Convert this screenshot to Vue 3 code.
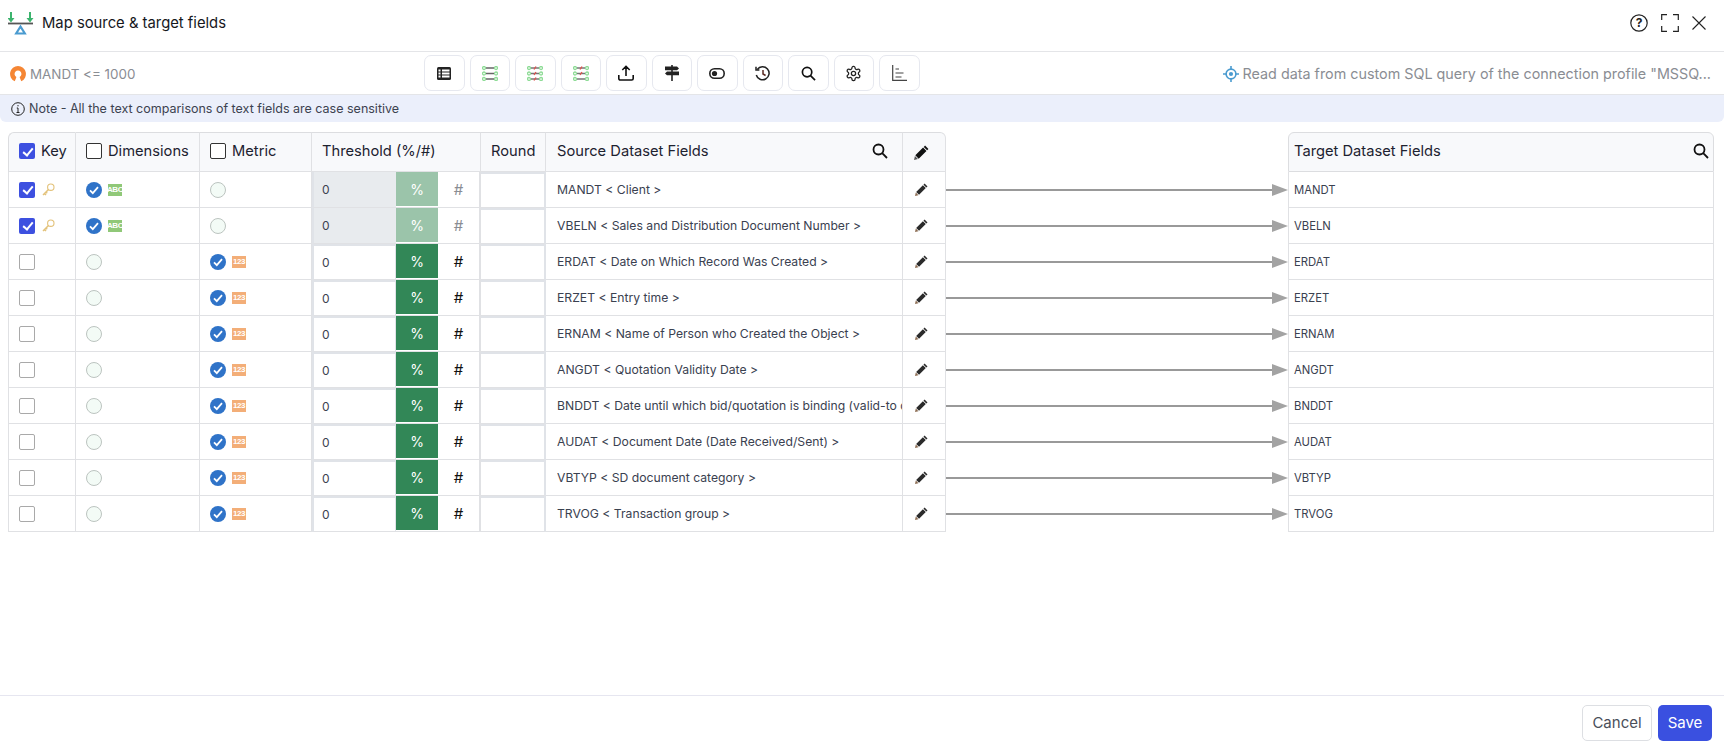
<script setup>
const sourceFields = [
  { name: 'MANDT', desc: 'MANDT < Client >', type: 'key' },
  { name: 'VBELN', desc: 'VBELN < Sales and Distribution Document Number >', type: 'key' },
  { name: 'ERDAT', desc: 'ERDAT < Date on Which Record Was Created >', type: 'metric' },
  { name: 'ERZET', desc: 'ERZET < Entry time >', type: 'metric' },
  { name: 'ERNAM', desc: 'ERNAM < Name of Person who Created the Object >', type: 'metric' },
  { name: 'ANGDT', desc: 'ANGDT < Quotation Validity Date >', type: 'metric' },
  { name: 'BNDDT', desc: 'BNDDT < Date until which bid/quotation is binding (valid-to date) >', type: 'metric' },
  { name: 'AUDAT', desc: 'AUDAT < Document Date (Date Received/Sent) >', type: 'metric' },
  { name: 'VBTYP', desc: 'VBTYP < SD document category >', type: 'metric' },
  { name: 'TRVOG', desc: 'TRVOG < Transaction group >', type: 'metric' },
]
const checkPath = 'M5 10.5 8.5 14 15 6.5'
const gearPath = 'M12.22 2h-.44a2 2 0 0 0-2 2v.18a2 2 0 0 1-1 1.73l-.43.25a2 2 0 0 1-2 0l-.15-.08a2 2 0 0 0-2.73.73l-.22.38a2 2 0 0 0 .73 2.73l.15.1a2 2 0 0 1 1 1.72v.51a2 2 0 0 1-1 1.74l-.15.09a2 2 0 0 0-.73 2.73l.22.38a2 2 0 0 0 2.73.73l.15-.08a2 2 0 0 1 2 0l.43.25a2 2 0 0 1 1 1.73V20a2 2 0 0 0 2 2h.44a2 2 0 0 0 2-2v-.18a2 2 0 0 1 1-1.73l.43-.25a2 2 0 0 1 2 0l.15.08a2 2 0 0 0 2.73-.73l.22-.39a2 2 0 0 0-.73-2.73l-.15-.08a2 2 0 0 1-1-1.74v-.5a2 2 0 0 1 1-1.74l.15-.09a2 2 0 0 0 .73-2.73l-.22-.38a2 2 0 0 0-2.73-.73l-.15.08a2 2 0 0 1-2 0l-.43-.25a2 2 0 0 1-1-1.73V4a2 2 0 0 0-2-2z'
</script>

<template>
  <div class="page">
    <header class="top">
      <svg class="logo" width="26" height="24" viewBox="0 0 26 24">
        <path d="M2 0h2v6h2.500L3 10.500-.5 6H2zM21 0h2v6h2.500L22 10.500 18.500 6H21z" fill="#3cb46e" transform="translate(0 1)" />
        <path d="M0 12.500h25" stroke="#555" stroke-width="1.800" />
        <path d="M12.500 15.500l4.300 7h-8.600z" fill="none" stroke="#4a9bd0" stroke-width="2.200" />
      </svg>
      <h1>Map source &amp; target fields</h1>
      <div class="top-actions">
        <svg width="18" height="18" viewBox="0 0 18 18">
          <circle cx="9" cy="9" r="8.200" fill="none" stroke="#222" stroke-width="1.200" />
          <text x="9" y="13.200" text-anchor="middle" class="qmark">?</text>
        </svg>
        <svg width="18" height="18" viewBox="0 0 18 18">
          <path d="M6 .7H.7V6M12 .7h5.300V6M6 17.300H.7V12M12 17.300h5.300V12" fill="none" stroke="#222" stroke-width="1.200" />
        </svg>
        <svg width="14" height="14" viewBox="0 0 14 14">
          <path d="M.5.5l13 13M13.500.5l-13 13" stroke="#222" stroke-width="1.100" />
        </svg>
      </div>
    </header>

    <div class="toolbar">
      <div class="filter">
        <svg width="16" height="16" viewBox="0 0 16 16">
          <path fill-rule="evenodd" d="M8 0a8 8 0 0 1 3.200 15.300L9.600 11a3.400 3.400 0 1 0-3.200 0l-1.600 4.300A8 8 0 0 1 8 0z" fill="#f58634" />
        </svg>
        <span>MANDT &lt;= 1000</span>
      </div>
      <div class="tools">
        <button class="tool">
          <svg width="14" height="13" viewBox="0 0 14 13"><rect width="14" height="13" rx="1.500" fill="#222" /><path d="M1.500 2.500h2v2h-2zM5 2.500h7.500v2H5zM1.500 5.500h2v2h-2zM5 5.500h7.500v2H5zM1.500 8.500h2v2h-2zM5 8.500h7.500v2H5z" fill="#fff" /></svg>
        </button>
        <button class="tool">
          <svg width="16" height="15" viewBox="0 0 16 15" fill="none" stroke="#8fdc97" stroke-width="1.300">
            <circle cx="2" cy="2" r="1.500" /><circle cx="14" cy="2" r="1.500" /><circle cx="2" cy="7.500" r="1.500" /><circle cx="14" cy="7.500" r="1.500" /><circle cx="2" cy="13" r="1.500" /><circle cx="14" cy="13" r="1.500" />
            <path d="M4 2h8M4 7.500h8M4 13h8" stroke="#666" />
          </svg>
        </button>
        <button class="tool">
          <svg width="16" height="15" viewBox="0 0 16 15" fill="none" stroke="#8fdc97" stroke-width="1.300">
            <circle cx="2" cy="2" r="1.500" /><circle cx="14" cy="2" r="1.500" /><circle cx="2" cy="7.500" r="1.500" /><circle cx="14" cy="7.500" r="1.500" /><circle cx="2" cy="13" r="1.500" /><circle cx="14" cy="13" r="1.500" />
            <path d="M4 2h8M4 7.500h8M4 13h8" stroke="#777" /><path d="M9 .5l-2 3M9 6l-2 3M9 11.500l-2 3" stroke="#e0524d" />
          </svg>
        </button>
        <button class="tool">
          <svg width="16" height="15" viewBox="0 0 16 15" fill="none" stroke="#8fdc97" stroke-width="1.300">
            <circle cx="2" cy="2" r="1.500" /><circle cx="14" cy="2" r="1.500" /><circle cx="2" cy="7.500" r="1.500" /><circle cx="14" cy="7.500" r="1.500" /><circle cx="2" cy="13" r="1.500" /><circle cx="14" cy="13" r="1.500" />
            <path d="M4 2h8M4 7.500h8M4 13h8" stroke="#777" /><path d="M9 .5l-2 3M9 6l-2 3" stroke="#e0524d" />
          </svg>
        </button>
        <button class="tool">
          <svg width="16" height="16" viewBox="0 0 16 16" fill="none" stroke="#111" stroke-width="1.600"><path d="M8 11V1.500M4.300 5L8 1.300 11.700 5M.8 10v3.500A1.500 1.500 0 0 0 2.300 15h11.400a1.500 1.500 0 0 0 1.500-1.500V10" /></svg>
        </button>
        <button class="tool">
          <svg width="14" height="16" viewBox="0 0 14 16"><path d="M6.200 0h1.600v16H6.200z" fill="#222" /><path d="M0 1.500h12l2 1.900-2 1.900H0zM2 6.500h12v3.800H2l-2-1.900z" fill="#222" /></svg>
        </button>
        <button class="tool">
          <svg width="16" height="11" viewBox="0 0 16 11"><rect x=".8" y=".8" width="14.400" height="9.400" rx="4.700" fill="none" stroke="#222" stroke-width="1.600" /><circle cx="5.500" cy="5.500" r="2.600" fill="#222" /></svg>
        </button>
        <button class="tool">
          <svg width="15" height="15" viewBox="0 0 15 15" fill="none" stroke="#222" stroke-width="1.500"><path d="M2.300 3.500A6.500 6.500 0 1 1 1.300 9" /><path d="M1 .8v3.200h3.400" /><path d="M8 4v4l2.600 1.500" stroke="#5a2a22" /></svg>
        </button>
        <button class="tool">
          <svg width="15" height="15" viewBox="0 0 16 16" fill="none" stroke="#111" stroke-width="1.800"><circle cx="6.500" cy="6.500" r="5" /><path d="M10.200 10.200L15 15" /></svg>
        </button>
        <button class="tool">
          <svg width="17" height="17" viewBox="0 0 24 24" fill="none" stroke="#222" stroke-width="1.800"><path :d="gearPath" /><circle cx="12" cy="12" r="3" /></svg>
        </button>
        <button class="tool">
          <svg width="15" height="16" viewBox="0 0 15 16" fill="none" stroke="#444" stroke-width="1.200"><path d="M.7 0v15.300H15" /><path d="M3.500 4h3.500M3.500 8h8M3.500 12h6" /></svg>
        </button>
      </div>
      <div class="origin">
        <svg width="16" height="16" viewBox="0 0 17 17" fill="none" stroke="#4a9bd0">
          <circle cx="8.500" cy="8.500" r="5.200" stroke-width="1.700" /><circle cx="8.500" cy="8.500" r="2.200" fill="#4a9bd0" stroke="none" />
          <path d="M8.500 0v3.500M8.500 13.500V17M0 8.500h3.500M13.500 8.500H17" stroke-width="1.700" />
        </svg>
        <span>Read data from custom SQL query of the connection profile "MSSQ...</span>
      </div>
    </div>

    <div class="note">
      <svg width="14" height="14" viewBox="0 0 14 14" fill="none" stroke="#222">
        <circle cx="7" cy="7" r="6.300" /><path d="M7 6v4.500M5.500 10.500h3M5.800 6H7" /><path d="M7 3.200v1" stroke-width="1.300" />
      </svg>
      <span>Note - All the text comparisons of text fields are case sensitive</span>
    </div>

    <main class="mapping">
      <section class="source">
        <div class="th first"><i class="box checked" />Key</div>
        <div class="th"><i class="box dark" />Dimensions</div>
        <div class="th"><i class="box dark" />Metric</div>
        <div class="th">Threshold (%/#)</div>
        <div class="th">Round</div>
        <div class="th between">
          Source Dataset Fields
          <svg width="16" height="16" viewBox="0 0 16 16" fill="none" stroke="#111" stroke-width="1.800"><circle cx="6.500" cy="6.500" r="5" /><path d="M10.200 10.200L15 15" /></svg>
        </div>
        <div class="th center last">
          <svg width="15" height="15" viewBox="0 0 16 16"><path d="M11.800.6l3.600 3.600L14 5.600 10.400 2zM9.700 2.700l3.600 3.600L5 14.600 1.400 11z" fill="#111" /><path d="M1 11.800L4.200 15 0 16z" fill="#555" /></svg>
        </div>

        <template v-for="f in sourceFields" :key="f.name">
          <div class="td keycell">
            <i class="box" :class="{ checked: f.type === 'key', plain: f.type !== 'key' }" />
            <svg v-if="f.type === 'key'" width="13" height="13" viewBox="0 0 13 13" fill="none" stroke="#e3c27a" stroke-width="1.100">
              <circle cx="8.800" cy="4.200" r="3.200" /><path d="M6.500 6.500L1 12M2.500 10.500l1.500 1.500M4 9l1.200 1.200" stroke-width="1.500" />
            </svg>
          </div>
          <div class="td">
            <template v-if="f.type === 'key'">
              <svg class="tick" width="16" height="16" viewBox="0 0 20 20"><circle cx="10" cy="10" r="10" fill="#2f73c8" /><path :d="checkPath" fill="none" stroke="#fff" stroke-width="2.200" /></svg>
              <b class="badge abc">ABC</b>
            </template>
            <i v-else class="radio" />
          </div>
          <div class="td">
            <template v-if="f.type === 'metric'">
              <svg class="tick" width="16" height="16" viewBox="0 0 20 20"><circle cx="10" cy="10" r="10" fill="#2f73c8" /><path :d="checkPath" fill="none" stroke="#fff" stroke-width="2.200" /></svg>
              <b class="badge num">123</b>
            </template>
            <i v-else class="radio" />
          </div>
          <div class="td threshold" :class="{ locked: f.type === 'key' }">
            <span class="value">0</span>
            <span class="pct">%</span>
            <span class="hash">#</span>
          </div>
          <div class="td round"></div>
          <div class="td desc"><span>{{ f.desc }}</span></div>
          <div class="td center last">
            <svg width="13" height="13" viewBox="0 0 16 16"><path d="M11.800.6l3.600 3.600L14 5.600 10.400 2zM9.700 2.700l3.600 3.600L5 14.600 1.400 11z" fill="#2b2b2b" /><path d="M1 11.800L4.200 15 0 16z" fill="#8a6a50" /></svg>
          </div>
        </template>
      </section>

      <div class="links">
        <div v-for="f in sourceFields" :key="f.name" class="link">
          <svg width="100%" height="12" viewBox="0 0 342 12" preserveAspectRatio="none">
            <path d="M0 6h328" stroke="#999" stroke-width="2" /><path d="M326 0l16 6-16 6z" fill="#a3a3a3" />
          </svg>
        </div>
      </div>

      <section class="target">
        <div class="target-head">
          Target Dataset Fields
          <svg width="16" height="16" viewBox="0 0 16 16" fill="none" stroke="#111" stroke-width="1.800"><circle cx="6.500" cy="6.500" r="5" /><path d="M10.200 10.200L15 15" /></svg>
        </div>
        <div v-for="f in sourceFields" :key="f.name" class="target-row">{{ f.name }}</div>
      </section>
    </main>

    <footer class="bottom">
      <button class="btn cancel">Cancel</button>
      <button class="btn save">Save</button>
    </footer>
  </div>
</template>

<style>
html, body { margin: 0; background: #fff; }
</style>

<style scoped>
.page {
  width: 1724px;
  height: 749px;
  display: flex;
  flex-direction: column;
  font-family: Inter, "Liberation Sans", sans-serif;
  color: #252c3a;
  overflow: hidden;
}

.top {
  height: 52px;
  flex: none;
  display: flex;
  align-items: center;
  padding: 0 18px 6px 8px;
  box-sizing: border-box;
  border-bottom: 1px solid #e4e5e8;
}
.logo { margin-right: 8px; }
h1 { margin: 0; font-size: 14.800px; font-weight: 400; color: #16181d; }
.top-actions { margin-left: auto; display: flex; align-items: center; gap: 13px; }
.qmark { font: 700 12px Inter, sans-serif; fill: #222; }

.toolbar {
  height: 43px;
  flex: none;
  display: flex;
  align-items: center;
  border-bottom: 1px solid #e4e5e8;
  box-sizing: border-box;
  font-size: 14.350px;
  color: #8a8d93;
}
.filter { width: 424px; flex: none; display: flex; align-items: center; gap: 4px; padding: 1px 0 0 10px; box-sizing: border-box; font-size: 13.400px; }
.tools { display: flex; gap: 5px; }
.tool {
  width: 40.500px;
  height: 36px;
  padding: 0;
  display: flex;
  align-items: center;
  justify-content: center;
  background: #fff;
  border: 1px solid #e6e8ef;
  border-radius: 7px;
}
.origin { margin-left: auto; display: flex; align-items: center; gap: 4px; padding: 1px 13px 0 0; white-space: nowrap; }

.note {
  height: 27px;
  flex: none;
  display: flex;
  align-items: center;
  gap: 4px;
  padding-left: 11px;
  background: #ebeffb;
  border-radius: 0 0 6px 6px;
  font-size: 12.500px;
  color: #3c4250;
}

.mapping { display: flex; margin: 10px 10px 0 8px; }

.source {
  flex: none;
  display: grid;
  grid-template-columns: 68px 124px 112px 169px 65px 357px 43px;
  grid-auto-rows: 36px;
  grid-template-rows: 40px;
}
.th, .td {
  display: flex;
  align-items: center;
  box-sizing: border-box;
  border-right: 1px solid #e0e1e4;
  border-bottom: 1px solid #e0e1e4;
  min-width: 0;
}
.th {
  gap: 6px;
  padding: 0 0 2px 10px;
  background: #f8f9fb;
  border-top: 1px solid #dcdde0;
  font-size: 14.700px;
  color: #1d2230;
  white-space: nowrap;
}
.th.first { border-left: 1px solid #dcdde0; border-top-left-radius: 6px; }
.th.last { border-top-right-radius: 6px; }
.th.between { justify-content: space-between; padding: 0 14px 2px 11px; }
.th.center, .td.center { justify-content: center; padding: 0 6px 0 0; }
.td { gap: 6px; padding-left: 10px; background: #fff; font-size: 11.500px; }
.td.keycell { gap: 7px; }
.td:nth-child(7n + 1) { border-left: 1px solid #e0e1e4; }

.box { width: 16px; height: 16px; box-sizing: border-box; border-radius: 2px; flex: none; display: block; }
.box.dark { border: 1.500px solid #333; background: #fff; }
.box.plain { border: 1px solid #a9a9a9; }
.box.checked { background: #3d50e0; position: relative; }
.box.checked::after {
  content: '';
  position: absolute;
  left: 5.500px;
  top: 2.500px;
  width: 4px;
  height: 8px;
  border: solid #fff;
  border-width: 0 2px 2px 0;
  transform: rotate(40deg);
}
.radio { width: 16px; height: 16px; box-sizing: border-box; border: 1px solid #bcc4c0; border-radius: 50%; background: #f3fbf6; display: block; }
.tick { flex: none; }
.badge {
  width: 14px;
  height: 12px;
  display: flex;
  align-items: center;
  justify-content: center;
  font: 700 8px "Liberation Sans", sans-serif;
  letter-spacing: -.5px;
  color: #fff;
}
.abc { background: #90c878; }
.num { background: #f3ae78; }

.threshold { padding: 0; gap: 0; border-right-width: 2px; border-left: 2px solid #e0e3e8; }
.threshold span { display: flex; align-items: center; justify-content: center; height: 100%; }
.threshold .value {
  width: 82px;
  flex: none;
  justify-content: flex-start;
  padding-left: 8px;
  box-sizing: border-box;
  border-top: 2px solid #e0e3e8;
  border-right: 1px solid #e0e3e8;
  font-size: 12px;
  color: #3c4250;
}
.threshold .pct { width: 42px; flex: none; height: calc(100% - 1px); margin-bottom: 1px; background: #328757; color: #fff; font-size: 14px; }
.threshold .hash { flex: 1; font-size: 15px; color: #111; }
.threshold.locked .value { background: #e8ebee; border-top: 0; border-right: 0; }
.threshold.locked .pct { background: #9bc4aa; }
.threshold.locked .hash { color: #8a8d93; }

.round { padding: 0; border-top: 2px solid #e0e3e8; border-right: 2px solid #e0e3e8; }
.desc { color: #3a4150; font-size: 12.200px; padding-left: 11px; }
.desc span { white-space: nowrap; overflow: hidden; }

.links { flex: 1; padding-top: 40px; display: flex; flex-direction: column; }
.link { height: 36px; flex: none; display: flex; align-items: center; }
.link svg { display: block; }

.target { width: 426px; flex: none; }
.target-head {
  height: 40px;
  box-sizing: border-box;
  display: flex;
  align-items: center;
  justify-content: space-between;
  padding: 0 4px 2px 5px;
  background: #f8f9fb;
  border: 1px solid #dcdde0;
  border-radius: 6px 6px 0 0;
  font-size: 14.700px;
  color: #1d2230;
}
.target-row {
  height: 36px;
  box-sizing: border-box;
  display: flex;
  align-items: center;
  padding-left: 5px;
  border: 1px solid #e0e1e4;
  border-top: 0;
  font-size: 11.300px;
  color: #3a4150;
}

.bottom {
  margin-top: auto;
  height: 54px;
  box-sizing: border-box;
  display: flex;
  justify-content: flex-end;
  align-items: center;
  gap: 6px;
  padding: 0 12px 0 0;
  border-top: 1px solid #e6e6f0;
}
.btn { height: 36px; border-radius: 5px; font: 400 15px Inter, sans-serif; padding: 0; }
.cancel { width: 70px; background: #fff; border: 1px solid #dddfe3; color: #4a4f5a; }
.save { width: 54px; background: #3a50e0; border: 0; color: #fff; }
</style>
